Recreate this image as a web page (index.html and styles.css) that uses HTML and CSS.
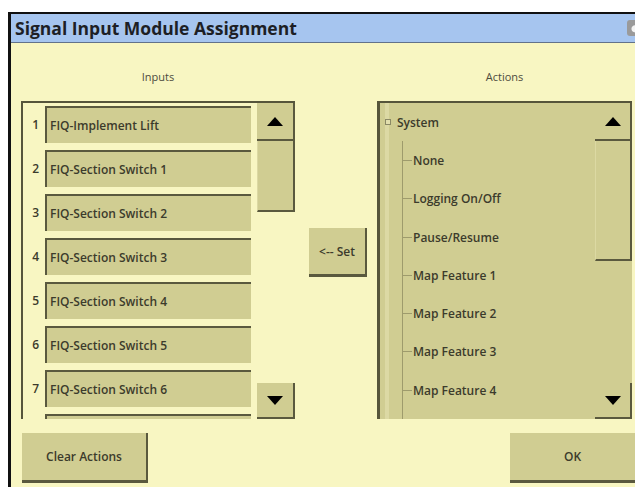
FILE: index.html
```html
<!DOCTYPE html>
<html lang="en">
<head>
    <meta charset="UTF-8">
    <meta name="viewport" content="width=device-width, initial-scale=1.0">
    <title>Signal Input Module Assignment</title>
    <link rel="stylesheet" href="styles.css">
</head>
<body>
    <div class="window">
        <div class="titlebar">
            <span>Signal Input Module Assignment</span>
            <span class="title-icon"></span>
        </div>

        <div class="content">
            <div class="labels">
                <div class="label">Inputs</div>
                <div></div>
                <div class="label">Actions</div>
            </div>

            <div class="main">
                <div class="list">
                    <div class="items">
                        <div class="row"><span class="num">1</span><span class="item">FIQ-Implement Lift</span></div>
                        <div class="row"><span class="num">2</span><span class="item">FIQ-Section Switch 1</span></div>
                        <div class="row"><span class="num">3</span><span class="item">FIQ-Section Switch 2</span></div>
                        <div class="row"><span class="num">4</span><span class="item">FIQ-Section Switch 3</span></div>
                        <div class="row"><span class="num">5</span><span class="item">FIQ-Section Switch 4</span></div>
                        <div class="row"><span class="num">6</span><span class="item">FIQ-Section Switch 5</span></div>
                        <div class="row"><span class="num">7</span><span class="item">FIQ-Section Switch 6</span></div>
                        <div class="row last"><span class="num"></span><span class="item"></span></div>
                    </div>
                    <div class="scroll">
                        <div class="scroll-btn up">
                            <svg width="16" height="9" viewBox="0 0 16 9"><polygon points="8,0 16,9 0,9" fill="#000"/></svg>
                        </div>
                        <div class="thumb short"></div>
                        <div class="track"></div>
                        <div class="scroll-btn down">
                            <svg width="16" height="9" viewBox="0 0 16 9"><polygon points="0,0 16,0 8,9" fill="#000"/></svg>
                        </div>
                    </div>
                </div>

                <div class="middle">
                    <button class="btn set">&lt;-- Set</button>
                </div>

                <div class="list tree-list">
                    <div class="tree">
                        <div class="tree-inner">
                            <div class="node root"><span class="expander"></span>System</div>
                            <div class="children">
                                <div class="node child">None</div>
                                <div class="node child">Logging On/Off</div>
                                <div class="node child">Pause/Resume</div>
                                <div class="node child">Map Feature 1</div>
                                <div class="node child">Map Feature 2</div>
                                <div class="node child">Map Feature 3</div>
                                <div class="node child">Map Feature 4</div>
                            </div>
                        </div>
                    </div>
                    <div class="scroll">
                        <div class="scroll-btn up">
                            <svg width="16" height="9" viewBox="0 0 16 9"><polygon points="8,0 16,9 0,9" fill="#000"/></svg>
                        </div>
                        <div class="thumb long"></div>
                        <div class="track"></div>
                        <div class="scroll-btn down">
                            <svg width="16" height="9" viewBox="0 0 16 9"><polygon points="0,0 16,0 8,9" fill="#000"/></svg>
                        </div>
                    </div>
                </div>
            </div>

            <div class="bottom">
                <button class="btn clear">Clear Actions</button>
                <button class="btn ok">OK</button>
            </div>
        </div>
    </div>
</body>
</html>
```

FILE: styles.css
```css
body {
    margin: 0;
    background: #fff;
    font-family: "Open Sans", "DejaVu Sans", sans-serif;
}

.window {
    margin: 12px 0 0 8px;
    width: 624px;
    height: 473px;
    border-top: 2px solid #111;
    border-left: 3px solid #111;
    background-color: #f8f6c2;
}

.titlebar {
    height: 28px;
    display: flex;
    align-items: center;
    justify-content: space-between;
    padding-left: 4px;
    background-color: #a6c5ef;
    border-bottom: 1px solid #62728a;
    font-size: 17.5px;
    font-weight: 700;
    color: #1d1f25;
}

.title-icon {
    width: 8px;
    height: 16px;
    border-radius: 3px 0 0 3px;
    background: radial-gradient(circle at 100% 55%, #f4f4f4 0 3px, #9a9a9a 4px);
}

.content {
    padding-left: 10px;
}

.labels {
    display: grid;
    grid-template-columns: 274px 82px 255px;
    height: 16px;
    padding-top: 26px;
    margin-bottom: 16px;
    font-size: 11px;
    line-height: 16px;
    color: #4d4c3e;
}

    .labels .label {
        text-align: center;
    }

.main {
    display: grid;
    grid-template-columns: 274px 82px 255px;
    height: 318px;
}

.list {
    display: flex;
    box-sizing: border-box;
    height: 318px;
    overflow: hidden;
    border-top: 2px solid #56553b;
    border-left: 2px solid #56553b;
}

.items {
    width: 234px;
    padding-top: 3px;
}

.row {
    display: flex;
    align-items: center;
    height: 37px;
    margin-bottom: 7px;
    font-size: 12px;
    font-weight: 600;
    color: #3c3b2c;
}

    .row.last {
        height: 5px;
        align-items: flex-start;
        margin-bottom: 0;
    }

.num {
    width: 16px;
    padding-right: 6px;
    text-align: right;
}

.item {
    box-sizing: border-box;
    width: 206px;
    height: 37px;
    line-height: 35px;
    padding-left: 3px;
    background-color: #d0cd92;
    border-top: 2px solid #5a593e;
    border-left: 2px solid #5a593e;
}

    .last .item {
        height: 5px;
    }

.scroll {
    display: flex;
    flex-direction: column;
    width: 38px;
    margin-left: auto;
}

.scroll-btn {
    display: flex;
    align-items: center;
    justify-content: center;
    box-sizing: border-box;
    background-color: #d0cd92;
    border-right: 2px solid #5a593e;
    border-bottom: 2px solid #5a593e;
}

    .scroll-btn.up {
        height: 38px;
    }

    .scroll-btn.down {
        height: 36px;
    }

.thumb {
    box-sizing: border-box;
    background-color: #d0cd92;
    border-right: 2px solid #5a593e;
    border-bottom: 2px solid #5a593e;
    border-left: 1px solid #dcd9a3;
}

    .thumb.short {
        height: 71px;
    }

    .thumb.long {
        height: 120px;
    }

.track {
    flex: 1;
}

.middle {
    padding: 127px 0 0 14px;
}

.btn {
    font-family: "Open Sans", "DejaVu Sans", sans-serif;
    font-size: 12px;
    font-weight: 600;
    color: #3c3b2c;
    background-color: #d0cd92;
    border: none;
    border-right: 2px solid #5a593e;
    border-bottom: 3px solid #5a593e;
    padding: 0;
    box-sizing: border-box;
}

.set {
    width: 58px;
    height: 49px;
}

.tree-list {
    border-left-width: 3px;
    background-color: #d0cd92;
}

.tree {
    width: 215px;
    padding-left: 5px;
    box-sizing: border-box;
}

.tree-inner {
    border-left: 4px solid #dcd9a4;
    height: 316px;
}

.node {
    display: flex;
    align-items: center;
    height: 38.3px;
    font-size: 12px;
    font-weight: 600;
    color: #3c3b2c;
}

.root {
    margin-left: -4px;
}

.expander {
    box-sizing: border-box;
    width: 6px;
    height: 6px;
    margin-right: 6px;
    border: 1px solid #8b8965;
    background-color: #e2dfae;
}

.children {
    margin-left: 13px;
    border-left: 1px solid #9e9b6c;
    height: 278px;
}

    .child::before {
        content: "";
        width: 9px;
        height: 1px;
        margin-right: 1px;
        background-color: #9e9b6c;
    }

.tree-list .scroll {
    width: 37px;
}

.bottom {
    display: flex;
    justify-content: space-between;
    margin-top: 14px;
    padding-left: 1px;
}

.clear {
    width: 126px;
    height: 50px;
}

.ok {
    width: 125px;
    height: 50px;
    border-right: none;
}
```
